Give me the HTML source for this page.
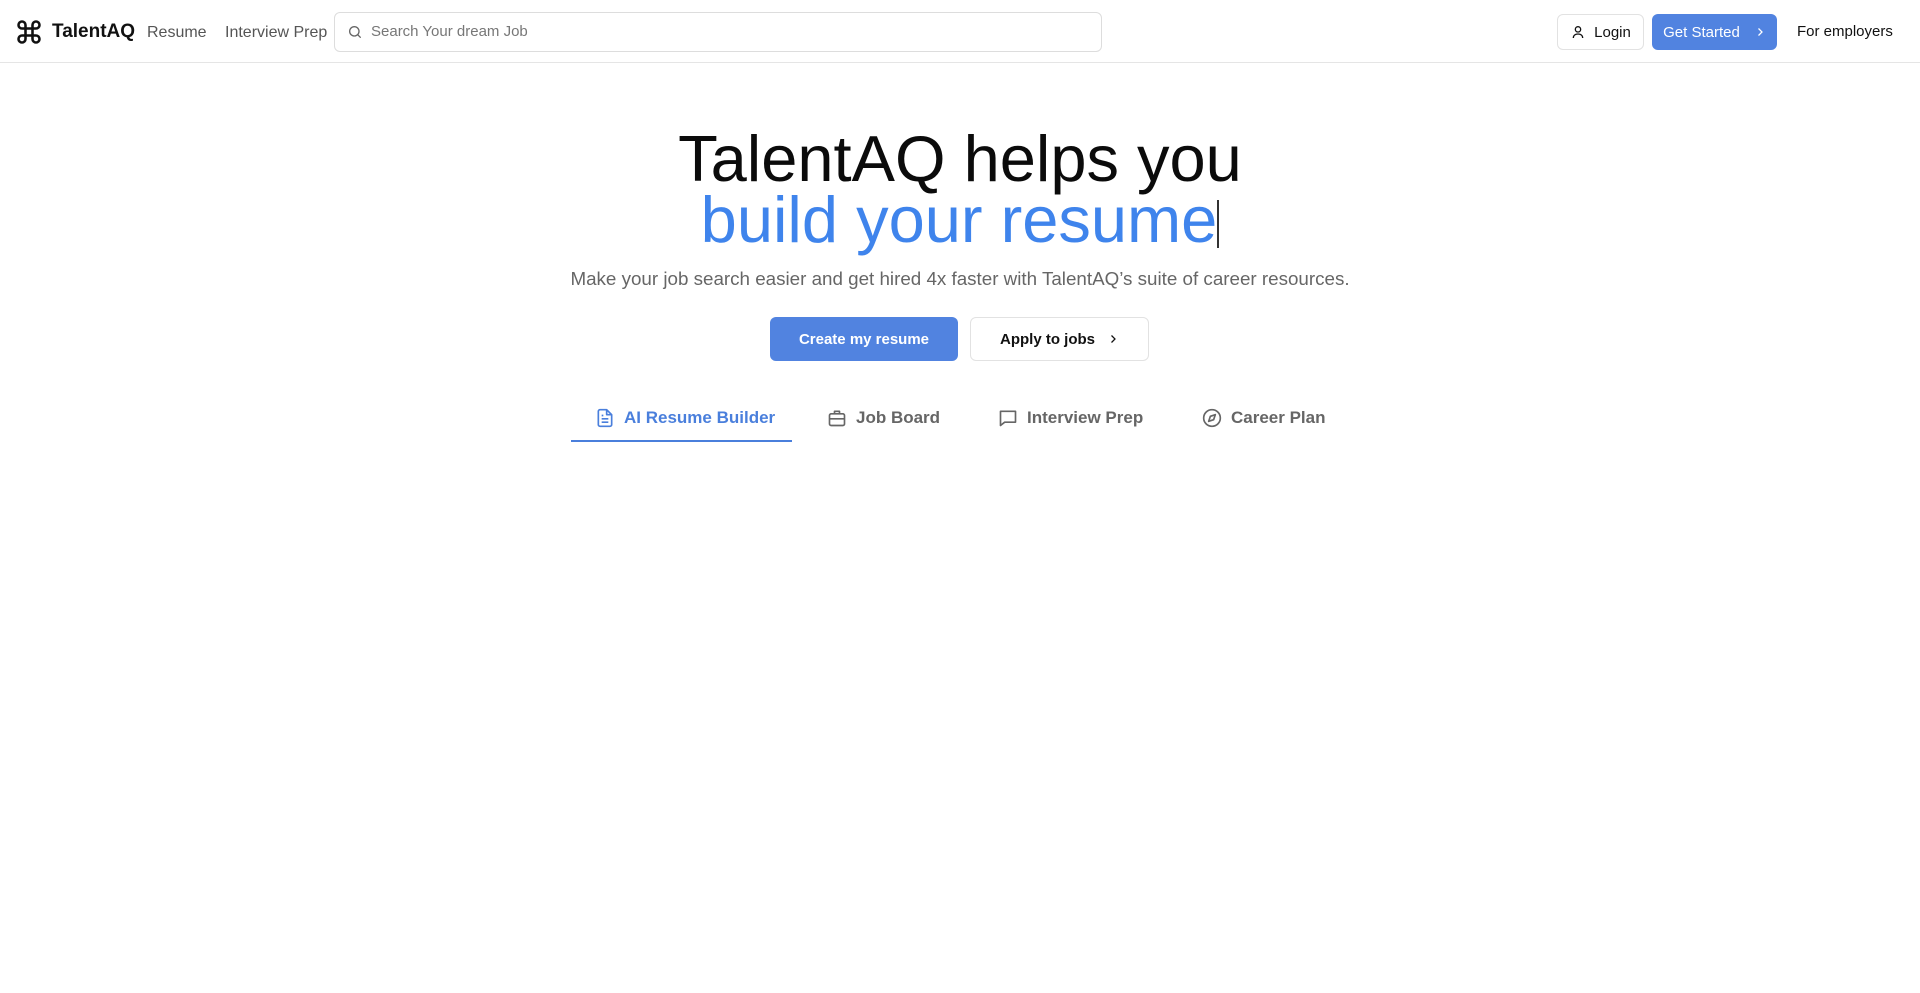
<!DOCTYPE html>
<html><head><meta charset="utf-8"><style>
*{box-sizing:border-box;margin:0;padding:0}
body{width:1920px;height:993px;background:#fff;font-family:"Liberation Sans",Arial,sans-serif;position:relative;overflow:hidden;color:#111}
.a{position:absolute;white-space:nowrap}
.hdr{position:absolute;left:0;top:0;width:1920px;height:63px;border-bottom:1px solid #e5e5e5}
.nav{font-size:16px;color:#555;top:24px}
.btn{position:absolute;border-radius:6px;display:flex;align-items:center;justify-content:center;font-size:15px;font-weight:bold}
.tab{position:absolute;top:408px;font-size:17px;font-weight:bold;color:#666;display:flex;align-items:center;gap:9px}
</style></head><body>
<div class="hdr"></div>
<svg class="a" style="left:15px;top:18px" width="28" height="28" viewBox="0 0 24 24" fill="none" stroke="#111" stroke-width="2.2" stroke-linecap="round" stroke-linejoin="round"><path d="M15 6v12a3 3 0 1 0 3-3H6a3 3 0 1 0 3 3V6a3 3 0 1 0-3 3h12a3 3 0 1 0-3-3"/></svg>
<div class="a" style="left:52px;top:21px;font-size:19px;font-weight:bold;color:#111">TalentAQ</div>
<div class="a nav" style="left:147px">Resume</div>
<div class="a nav" style="left:225px">Interview Prep</div>
<div class="a" style="left:334px;top:12px;width:768px;height:40px;border:1px solid #ddd;border-radius:6px"></div>
<svg class="a" style="left:347px;top:24px" width="16" height="16" viewBox="0 0 24 24" fill="none" stroke="#666" stroke-width="2" stroke-linecap="round"><circle cx="11" cy="11" r="7"/><path d="M20 20l-4-4"/></svg>
<div class="a" style="left:371px;top:23px;font-size:15px;color:#777">Search Your dream Job</div>
<div class="btn" style="left:1557px;top:14px;width:87px;height:36px;border:1px solid #e2e2e2;color:#111;font-weight:normal;font-size:15px;gap:8px"><svg width="16" height="16" viewBox="0 0 24 24" fill="none" stroke="#111" stroke-width="2"><circle cx="12" cy="8" r="4"/><path d="M5 21c0-4 3-6 7-6s7 2 7 6"/></svg>Login</div>
<div class="btn" style="left:1652px;top:14px;width:125px;height:36px;background:#5183e0;color:#fff;font-weight:normal;font-size:15px;gap:14px">Get Started<svg width="12" height="12" viewBox="0 0 24 24" fill="none" stroke="#fff" stroke-width="2.5"><path d="M9 5l7 7-7 7"/></svg></div>
<div class="a" style="left:1797px;top:23px;font-size:15px;color:#111">For employers</div>
<div class="a" style="left:0;width:1920px;text-align:center;top:128px;font-size:65px;line-height:62px;color:#0b0b0b">TalentAQ helps you</div>
<div class="a" style="left:0;width:1920px;text-align:center;top:189px;font-size:65px;line-height:62px;color:#3f84ec">build your resume<span style="display:inline-block;width:2px;height:48px;background:#333;vertical-align:-6px"></span></div>
<div class="a" style="left:0;width:1920px;text-align:center;top:268px;font-size:18.8px;color:#666">Make your job search easier and get hired 4x faster with TalentAQ’s suite of career resources.</div>
<div class="btn" style="left:770px;top:317px;width:188px;height:44px;background:#5183e0;color:#fff">Create my resume</div>
<div class="btn" style="left:970px;top:317px;width:179px;height:44px;border:1px solid #e2e2e2;color:#111;gap:12px">Apply to jobs<svg width="12" height="12" viewBox="0 0 24 24" fill="none" stroke="#111" stroke-width="2.5"><path d="M9 5l7 7-7 7"/></svg></div>
<div class="tab" style="left:595px;color:#4a7fdc"><svg width="20" height="20" viewBox="0 0 24 24" fill="none" stroke="#4a7fdc" stroke-width="2" stroke-linejoin="round"><path d="M14 2H6a2 2 0 0 0-2 2v16a2 2 0 0 0 2 2h12a2 2 0 0 0 2-2V8z"/><path d="M14 2v6h6M8 13h8M8 17h8M8 9h2"/></svg>AI Resume Builder</div>
<div class="a" style="left:571px;top:440px;width:221px;height:2px;background:#4a7fdc"></div>
<div class="tab" style="left:827px"><svg width="20" height="20" viewBox="0 0 24 24" fill="none" stroke="#666" stroke-width="2" stroke-linejoin="round"><rect x="3" y="7" width="18" height="14" rx="2"/><path d="M9 7V4h6v3M3 13h18"/></svg>Job Board</div>
<div class="tab" style="left:998px"><svg width="20" height="20" viewBox="0 0 24 24" fill="none" stroke="#666" stroke-width="2" stroke-linejoin="round"><path d="M3 4h18v13H8l-5 4z"/></svg>Interview Prep</div>
<div class="tab" style="left:1202px"><svg width="20" height="20" viewBox="0 0 24 24" fill="none" stroke="#666" stroke-width="2" stroke-linejoin="round"><circle cx="12" cy="12" r="10"/><path d="M16 8l-2 6-6 2 2-6z"/></svg>Career Plan</div>
</body></html>
